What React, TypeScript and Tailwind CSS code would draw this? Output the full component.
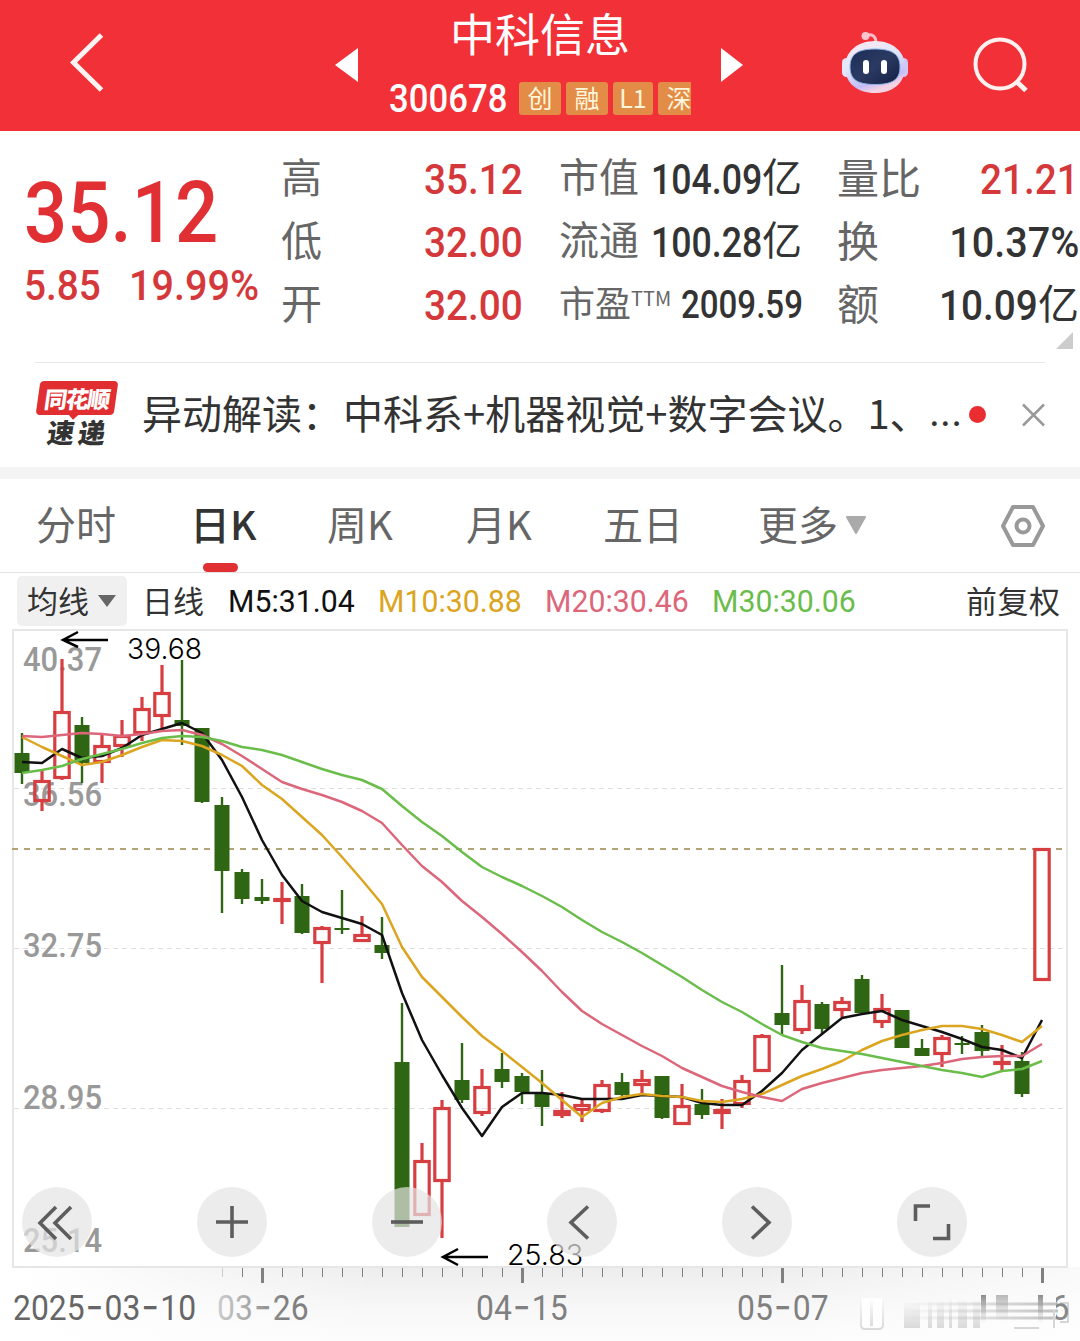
type Candle = [up: number, high: number, top: number, bottom: number, low: number];

// up flag, then wick and body positions on the chart
const candles: Candle[] = [
    [0, 733, 753, 773, 784], [1, 771, 780, 802, 811], [1, 659, 711, 779, 780], [0, 717, 725, 763, 783],
    [1, 733, 745, 763, 783], [1, 720, 735, 747, 757], [1, 697, 708, 734, 741], [1, 665, 692, 717, 728],
    [0, 660, 720, 726, 745], [0, 728, 728, 802, 803], [0, 797, 805, 871, 913], [0, 869, 872, 899, 904],
    [0, 879, 897, 901, 904], [1, 882, 898, 902, 924], [0, 884, 896, 933, 934], [1, 926, 927, 944, 983],
    [0, 890, 928, 930, 934], [1, 916, 934, 942, 942], [0, 917, 945, 953, 959], [0, 1003, 1062, 1227, 1227],
    [1, 1143, 1160, 1216, 1216], [1, 1100, 1107, 1182, 1238], [0, 1043, 1080, 1100, 1103], [1, 1069, 1086, 1114, 1116],
    [0, 1053, 1069, 1082, 1088], [0, 1073, 1076, 1092, 1104], [0, 1070, 1093, 1107, 1126], [1, 1092, 1110, 1116, 1118],
    [1, 1099, 1104, 1111, 1122], [1, 1080, 1084, 1112, 1113], [0, 1073, 1082, 1095, 1096], [1, 1070, 1079, 1086, 1095],
    [0, 1076, 1076, 1118, 1119], [1, 1084, 1105, 1125, 1125], [0, 1089, 1104, 1115, 1119], [1, 1099, 1109, 1114, 1129],
    [1, 1075, 1080, 1105, 1108], [1, 1034, 1035, 1072, 1072], [0, 965, 1013, 1025, 1034], [1, 985, 1000, 1031, 1034],
    [0, 1002, 1004, 1029, 1034], [1, 997, 1001, 1011, 1017], [0, 975, 979, 1013, 1013], [1, 994, 1008, 1023, 1028],
    [0, 1010, 1010, 1048, 1048], [0, 1039, 1048, 1056, 1056], [1, 1035, 1037, 1055, 1067], [0, 1036, 1043, 1045, 1054],
    [0, 1025, 1032, 1051, 1056], [1, 1045, 1061, 1065, 1071], [0, 1052, 1061, 1094, 1097], [1, 848, 848, 981, 981],
];

const averages = [
    {
        color: "#111111",
        values: [762, 763, 749, 758, 756, 748, 735, 729, 723, 733, 760, 797, 840, 875, 901, 912, 918, 924, 935, 993, 1040, 1075, 1108, 1136, 1107, 1093, 1093, 1095, 1099, 1099, 1099, 1095, 1096, 1097, 1103, 1105, 1105, 1091, 1073, 1050, 1034, 1018, 1014, 1011, 1020, 1026, 1032, 1039, 1047, 1050, 1058, 1020],
    },
    {
        color: "#dba520",
        values: [737, 747, 756, 765, 762, 755, 747, 740, 741, 746, 755, 766, 785, 799, 817, 835, 857, 880, 904, 947, 977, 997, 1017, 1036, 1051, 1067, 1083, 1100, 1117, 1103, 1097, 1094, 1096, 1097, 1101, 1102, 1099, 1094, 1085, 1076, 1069, 1061, 1050, 1041, 1035, 1030, 1026, 1026, 1029, 1035, 1042, 1026],
    },
    {
        color: "#dc667a",
        values: [736, 737, 735, 733, 734, 736, 734, 731, 730, 735, 744, 756, 769, 782, 789, 795, 802, 811, 823, 845, 866, 882, 901, 917, 934, 952, 971, 992, 1011, 1024, 1035, 1046, 1056, 1068, 1077, 1086, 1092, 1097, 1101, 1089, 1083, 1078, 1073, 1070, 1068, 1066, 1063, 1059, 1057, 1056, 1056, 1044],
    },
    {
        color: "#6abd4b",
        values: [773, 770, 766, 759, 754, 749, 743, 738, 736, 737, 741, 747, 750, 755, 762, 769, 775, 780, 789, 806, 822, 836, 852, 867, 877, 886, 896, 907, 920, 932, 942, 953, 965, 977, 990, 1002, 1012, 1024, 1035, 1042, 1048, 1051, 1054, 1058, 1062, 1066, 1070, 1073, 1077, 1071, 1069, 1061],
    },
];

const priceLabels = [
    { text: "40.37", y: 671 },
    { text: "36.56", y: 806 },
    { text: "32.75", y: 957 },
    { text: "28.95", y: 1109 },
    { text: "25.14", y: 1252 },
];

const candleX = (i: number) => 22 + i * 20;

function Robot() {
    return (
        <svg width="68" height="64" viewBox="0 0 68 64">
            <defs>
                <linearGradient id="shell" x1="0" y1="0" x2="0.4" y2="1">
                    <stop offset="0" stopColor="#ffe9ee" />
                    <stop offset="0.5" stopColor="#dfe6fb" />
                    <stop offset="0.85" stopColor="#c5bdf6" />
                    <stop offset="1" stopColor="#f6d3e2" />
                </linearGradient>
                <linearGradient id="visor" x1="0" y1="0" x2="1" y2="1">
                    <stop offset="0" stopColor="#1d2d55" />
                    <stop offset="0.5" stopColor="#2b3a62" />
                    <stop offset="1" stopColor="#141d42" />
                </linearGradient>
            </defs>
            <path d="M24 5 C31 2 35 5 35 12" fill="none" stroke="#f9bccb" strokeWidth="3" />
            <circle cx="24.500" cy="5" r="4" fill="#ffc4ce" />
            <rect x="1" y="27" width="9" height="19" rx="4.500" fill="#e9e3fb" />
            <rect x="58" y="27" width="9" height="19" rx="4.500" fill="#cfc6f5" />
            <path d="M34 10 C52 10 64 21 64 36 C64 52 52 62 34 62 C16 62 4 52 4 36 C4 21 16 10 34 10Z" fill="url(#shell)" />
            <path d="M34 18 C51 18 59 23 59 36 C59 49 51 53.500 34 53.500 C17 53.500 9 49 9 36 C9 23 17 18 34 18Z" fill="url(#visor)" stroke="#8eb7e8" strokeWidth="1" />
            <rect x="22" y="29" width="6" height="14" rx="3" fill="#fff" />
            <rect x="40" y="29" width="6" height="14" rx="3" fill="#fff" />
        </svg>
    );
}

function Header() {
    return (
        <header className="flex h-[131px] bg-[#f13037] pl-[69px] text-white">
            <button className="mt-[32px] h-[62px] w-[36px]">
                <svg width="36" height="62" viewBox="0 0 36 62" fill="none" stroke="#fff4f3" strokeWidth="5">
                    <path d="M32.500 3 L4.500 30.500 L32.500 58" />
                </svg>
            </button>
            <svg className="mt-[48px] ml-[230px]" width="24" height="34" viewBox="0 0 24 34" fill="#fff">
                <path d="M0 17 L23 0 V34Z" />
            </svg>
            <div className="ml-[30px] w-[302px]">
                <h1 className="mt-[6px] h-[54px] text-center text-[45px] leading-[54px]">中科信息</h1>
                <div className="mt-[14px] flex h-[48px] items-center overflow-hidden">
                    <span className="-mr-[10px] w-[140px] shrink-0 origin-left scale-x-[0.89] pt-[3px] font-[Roboto] text-[39px] leading-[45px] font-medium">300678</span>
                    <div className="flex gap-[5px] text-[25px] leading-[30px] text-[#fff6dc]">
                        <span className="h-[33px] w-[42px] shrink-0 rounded-[3px] bg-[#e38c47] text-center">创</span>
                        <span className="h-[33px] w-[42px] shrink-0 rounded-[3px] bg-[#e38c47] text-center">融</span>
                        <span className="h-[33px] w-[40px] shrink-0 rounded-[3px] bg-[#e38c47] text-center">L1</span>
                        <span className="h-[33px] w-[42px] shrink-0 rounded-[3px] bg-[#e38c47] text-center">深</span>
                    </div>
                </div>
            </div>
            <svg className="mt-[48px] ml-[30px]" width="24" height="34" viewBox="0 0 24 34" fill="#fff">
                <path d="M0 0 L22 17 L0 34Z" />
            </svg>
            <div className="mt-[31px] ml-[96px]">
                <Robot />
            </div>
            <svg className="mt-[36px] ml-[63px]" width="58" height="60" viewBox="0 0 58 60" fill="none" stroke="#fff1f0" strokeWidth="4">
                <circle cx="28" cy="28" r="24.500" />
                <path d="M45 46 L54 54.500" strokeWidth="5" />
            </svg>
        </header>
    );
}

function Quote() {
    return (
        <section className="relative flex h-[231px] pt-[17px] pl-[24px] leading-[63px] whitespace-nowrap text-[#333]">
            <div className="w-[257px] font-[Roboto] font-medium text-[#e13033]">
                <div className="mt-[20px] h-[88px] origin-left scale-x-[0.885] text-[86px] leading-[90px]">35.12</div>
                <div className="flex h-[60px] text-[43px] leading-[58px] text-[#d5383b]">
                    <span className="w-[105px] origin-left scale-x-[0.9]">5.85</span>
                    <span className="origin-left scale-x-[0.92]">19.99%</span>
                </div>
            </div>
            <div className="w-[242px]">
                <div className="flex h-[63px] justify-between">
                    <span className="-mt-[4px] text-[41px] text-[#666]">高</span>
                    <span className="origin-right scale-x-[0.9] font-[Roboto] text-[43px] font-medium text-[#d5383b]">35.12</span>
                </div>
                <div className="flex h-[63px] justify-between">
                    <span className="-mt-[4px] text-[41px] text-[#666]">低</span>
                    <span className="origin-right scale-x-[0.9] font-[Roboto] text-[43px] font-medium text-[#d5383b]">32.00</span>
                </div>
                <div className="flex h-[63px] justify-between">
                    <span className="-mt-[4px] text-[41px] text-[#666]">开</span>
                    <span className="origin-right scale-x-[0.9] font-[Roboto] text-[43px] font-medium text-[#d5383b]">32.00</span>
                </div>
            </div>
            <div className="ml-[36px] w-[243px]">
                <div className="flex h-[63px] justify-between">
                    <span className="-mt-[4px] text-[40px] text-[#666]">市值</span>
                    <span className="flex w-[151px] justify-between">
                        <span className="w-[110px] origin-left scale-x-[0.85] font-[Roboto] text-[42px] font-medium">104.09</span>
                        <span className="-mt-[4px] text-[40px]">亿</span>
                    </span>
                </div>
                <div className="flex h-[63px] justify-between">
                    <span className="-mt-[4px] text-[40px] text-[#666]">流通</span>
                    <span className="flex w-[151px] justify-between">
                        <span className="w-[110px] origin-left scale-x-[0.85] font-[Roboto] text-[42px] font-medium">100.28</span>
                        <span className="-mt-[4px] text-[40px]">亿</span>
                    </span>
                </div>
                <div className="flex h-[63px] justify-between">
                    <span className="-mt-[4px] flex text-[36px] text-[#666]">
                        市盈
                        <span className="-mt-[4px] text-[20px]">TTM</span>
                    </span>
                    <span className="w-[121px] origin-left scale-x-[0.87] font-[Roboto] text-[38px] font-medium">2009.59</span>
                </div>
            </div>
            <div className="ml-[35px] w-[242px]">
                <div className="flex h-[63px] justify-between">
                    <span className="-mt-[4px] text-[42px] text-[#666]">量比</span>
                    <span className="origin-right scale-x-[0.9] font-[Roboto] text-[43px] font-medium text-[#d5383b]">21.21</span>
                </div>
                <div className="flex h-[63px] justify-between">
                    <span className="-mt-[4px] text-[42px] text-[#666]">换</span>
                    <span className="origin-right scale-x-[0.92] font-[Roboto] text-[43px] font-medium">10.37%</span>
                </div>
                <div className="flex h-[63px] justify-between">
                    <span className="-mt-[4px] text-[42px] text-[#666]">额</span>
                    <span className="flex">
                        <span className="origin-right scale-x-[0.9] font-[Roboto] text-[43px] font-medium">10.09</span>
                        <span className="-mt-[4px] text-[41px]">亿</span>
                    </span>
                </div>
            </div>
            <svg className="absolute top-[201px] right-[7px]" width="17" height="17" viewBox="0 0 17 17" fill="#ccc">
                <path d="M17 0 V17 H0Z" />
            </svg>
        </section>
    );
}

function News() {
    return (
        <section className="mx-[35px] flex h-[105px] border-t border-[#e8e8e8] whitespace-nowrap">
            <div className="mt-[18px] w-[83px] shrink-0">
                <div className="relative ml-[3px] flex h-[34px] w-[78px] -skew-x-[8deg] items-center justify-center rounded-[4px] bg-[#e12e31] text-[23px] leading-none font-black tracking-[-1.500px] text-white">
                    同花顺
                    <span className="absolute top-[29px] left-[34px] size-[8px] rotate-45 bg-[#e12e31]"></span>
                </div>
                <div className="mt-[3px] flex -skew-x-[8deg] justify-center gap-[4px] text-[27px] leading-[28px] font-black text-[#333]">
                    <span>速</span>
                    <span>递</span>
                </div>
            </div>
            <p className="mt-[19px] ml-[24px] flex w-[827px] text-[40px] leading-[60px] text-[#333]">
                <span className="w-[201px] shrink-0">异动解读：</span>
                <span className="w-[586px] shrink-0">中科系+机器视觉+数字会议。1、</span>
                <span className="font-[Roboto] text-[42px]">...</span>
            </p>
            <span className="mt-[43px] ml-[1px] size-[17px] shrink-0 rounded-full bg-[#e92d30]"></span>
            <svg className="mt-[40px] ml-[35px] shrink-0" width="24" height="24" viewBox="0 0 24 24" stroke="#999" strokeWidth="2.500">
                <path d="M2 1.500 L23 22.500 M23 1.500 L2 22.500" />
            </svg>
        </section>
    );
}

function Tabs() {
    return (
        <nav className="flex h-[94px] border-b border-[#e4e4e4] pl-[36px] text-[40px] leading-[89px] whitespace-nowrap text-[#666]">
            <span className="w-[154px]">分时</span>
            <span className="relative w-[137px] font-medium text-[#333]">
                日K
                <span className="absolute top-[84px] left-[13px] h-[9px] w-[35px] rounded-full bg-[#e03033]"></span>
            </span>
            <span className="w-[139px]">周K</span>
            <span className="w-[137px]">月K</span>
            <span className="w-[155px]">五日</span>
            <span className="w-[87px]">更多</span>
            <svg className="mt-[37px]" width="22" height="19" viewBox="0 0 22 19" fill="#aaa">
                <path d="M2 1 H20 L11 17Z" stroke="#aaa" strokeWidth="2" strokeLinejoin="round" />
            </svg>
            <svg className="mt-[25px] ml-[133px]" width="46" height="44" viewBox="0 0 46 44" fill="none" stroke="#999" strokeWidth="4">
                <path d="M13 3 H33 L43 22 L33 41 H13 L3 22Z" strokeLinejoin="round" />
                <circle cx="23" cy="22" r="6.500" />
            </svg>
        </nav>
    );
}

function Legend() {
    return (
        <div className="flex h-[56px] pt-[3px] pl-[17px] text-[31px] leading-[50px] whitespace-nowrap text-[#333]">
            <button className="flex h-[50px] w-[110px] rounded-[5px] bg-[#f0f0f0] pl-[10px] leading-[47px]">
                均线
                <svg className="mt-[19px] ml-[9px]" width="18" height="12" viewBox="0 0 18 12" fill="#666">
                    <path d="M0 0 H18 L9 12Z" />
                </svg>
            </button>
            <span className="ml-[15px] w-[86px] leading-[47px]">日线</span>
            <span className="w-[150px] origin-left scale-x-[0.945] font-[Roboto] text-[32px] text-[#111]">M5:31.04</span>
            <span className="w-[167px] origin-left scale-x-[0.945] font-[Roboto] text-[32px] text-[#dba520]">M10:30.88</span>
            <span className="w-[167px] origin-left scale-x-[0.945] font-[Roboto] text-[32px] text-[#dc667a]">M20:30.46</span>
            <span className="w-[254px] origin-left scale-x-[0.945] font-[Roboto] text-[32px] text-[#6abd4b]">M30:30.06</span>
            <span className="leading-[47px] tracking-[0.500px]">前复权</span>
        </div>
    );
}

function Candlestick({ data, x }: { data: Candle; x: number }) {
    const [up, high, top, bottom, low] = data;

    if (up) {
        return (
            <g stroke="#d63e42" strokeWidth="3.200" fill="none">
                <path d={`M${x} ${high} V${top} M${x} ${bottom} V${low}`} />
                <rect x={x - 7.2} y={top + 1.5} width="14.400" height={bottom - top - 3} />
            </g>
        );
    }
    return (
        <g fill="#2f6613">
            <rect x={x - 1.2} y={high} width="2.400" height={low - high} />
            <rect x={x - 7.5} y={top} width="15" height={bottom - top} />
        </g>
    );
}

function DateLabel({ x, parts, color }: { x: number; parts: string[]; color: string }) {
    return (
        <text x={x} y="1320" fill={color} className="font-[Roboto] text-[35px]">
            {parts.map((part, i) => (
                <tspan key={i}>
                    {i > 0 && <tspan dx="1" className="font-[Inter] text-[39px]">-</tspan>}
                    <tspan dx={i > 0 ? 1 : 0} textLength={part.length * 17.9} lengthAdjust="spacingAndGlyphs">{part}</tspan>
                </tspan>
            ))}
        </text>
    );
}

function Chart() {
    return (
        <svg className="block" width="1080" height="712" viewBox="0 629 1080 712" fill="none">
            <defs>
                <linearGradient id="axis" x1="0" y1="0" x2="0" y2="1">
                    <stop offset="0" stopColor="#ededed" />
                    <stop offset="0.6" stopColor="#f8f8f8" />
                    <stop offset="1" stopColor="#fcfcfc" />
                </linearGradient>
                <linearGradient id="axisFade" x1="0" y1="0" x2="1" y2="0">
                    <stop offset="0.02" stopColor="#fff" />
                    <stop offset="0.35" stopColor="#fff" stopOpacity="0" />
                    <stop offset="0.7" stopColor="#fff" stopOpacity="0" />
                    <stop offset="1" stopColor="#fff" stopOpacity="0.7" />
                </linearGradient>
                <linearGradient id="dateFade" gradientUnits="userSpaceOnUse" x1="214" y1="0" x2="285" y2="0">
                    <stop offset="0" stopColor="#d0d0d0" />
                    <stop offset="1" stopColor="#808080" />
                </linearGradient>
                <linearGradient id="smudge" x1="0" y1="0" x2="0" y2="1">
                    <stop offset="0" stopColor="#999" stopOpacity="0.02" />
                    <stop offset="1" stopColor="#999" stopOpacity="0.35" />
                </linearGradient>
                <linearGradient id="smudgeDown" x1="0" y1="0" x2="0" y2="1">
                    <stop offset="0" stopColor="#777" stopOpacity="0.85" />
                    <stop offset="1" stopColor="#999" stopOpacity="0" />
                </linearGradient>
                <linearGradient id="smudgeAcross" gradientUnits="userSpaceOnUse" x1="900" y1="0" x2="1060" y2="0">
                    <stop offset="0" stopColor="#aaa" stopOpacity="0" />
                    <stop offset="1" stopColor="#999" stopOpacity="0.6" />
                </linearGradient>
                <clipPath id="lastDigit">
                    <rect x="1056" y="1290" width="14" height="34" />
                </clipPath>
            </defs>

            <rect x="0" y="1267" width="1080" height="74" fill="url(#axis)" />
            <rect x="0" y="1267" width="1080" height="74" fill="url(#axisFade)" />
            <rect x="13" y="630" width="1054" height="637" stroke="#e6e6e6" strokeWidth="2" />
            <path d="M14 788.500 H1066 M14 948.500 H1066 M14 1108.500 H1066" stroke="#dedede" strokeDasharray="5 4" />
            <path d="M12 849 H1066" stroke="#b3a478" strokeWidth="1.800" strokeDasharray="6 6" />

            {priceLabels.map(({ text, y }) => (
                <text key={text} x="23" y={y} textLength="79" lengthAdjust="spacingAndGlyphs" fill="#999" className="font-[Roboto] text-[34px] font-medium">
                    {text}
                </text>
            ))}
            {candles.map((data, i) => (
                <Candlestick key={i} data={data} x={candleX(i)} />
            ))}
            {averages.map(({ color, values }) => (
                <polyline
                    key={color}
                    points={values.map((y, i) => `${candleX(i)},${y}`).join(" ")}
                    stroke={color}
                    strokeWidth="2.500"
                    strokeLinejoin="round"
                />
            ))}

            <g stroke="#000" strokeWidth="2.500">
                <path d="M108 640 H63 M78 632 L63 640 L78 647" />
                <path d="M488 1257 H443 M458 1249 L443 1257 L458 1265" />
            </g>
            <text x="127" y="659" textLength="75" lengthAdjust="spacingAndGlyphs" fill="#000" className="font-[Inter] text-[29px] font-light">39.68</text>
            <text x="507" y="1265" textLength="76" lengthAdjust="spacingAndGlyphs" fill="#000" className="font-[Inter] text-[29px] font-light">25.83</text>

            {candles.map((_, i) => {
                if (i < 10) return null;
                const major = [12, 25, 38, 51].includes(i);
                return (
                    <path
                        key={i}
                        d={`M${candleX(i) + 0.5} 1268 V${major ? 1283 : 1277}`}
                        stroke={i === 10 ? "#ccc" : "#808080"}
                        strokeWidth={major ? 3 : 1}
                    />
                );
            })}

            <DateLabel x={13} parts={["2025", "03", "10"]} color="#666" />
            <DateLabel x={217} parts={["03", "26"]} color="url(#dateFade)" />
            <DateLabel x={476} parts={["04", "15"]} color="#808080" />
            <DateLabel x={737} parts={["05", "07"]} color="#808080" />

            {/* smeared end of the axis */}
            <g>
                <path d="M861 1298 V1325 Q861 1329 865 1329 H878 Q883 1329 883 1325 V1298" fill="#fff" fillOpacity="0.800" stroke="url(#smudge)" strokeWidth="2" />
                <rect x="870" y="1300" width="3" height="26" fill="url(#smudge)" />
                <rect x="904" y="1303" width="16" height="25" fill="url(#smudge)" />
                <rect x="928" y="1301" width="4" height="27" fill="url(#smudge)" />
                <rect x="937" y="1301" width="7" height="27" fill="url(#smudge)" />
                <rect x="949" y="1298" width="3" height="30" fill="url(#smudge)" />
                <rect x="958" y="1300" width="9" height="28" fill="url(#smudge)" />
                <rect x="973" y="1300" width="7" height="28" fill="url(#smudge)" />
                <rect x="981" y="1295" width="5" height="28" fill="url(#smudgeDown)" />
                <rect x="996" y="1295" width="12" height="26" fill="url(#smudgeDown)" opacity="0.600" />
                <rect x="1038" y="1295" width="5" height="28" fill="url(#smudgeDown)" />
                <path d="M900 1304 L1058 1304.100 M900 1311 L1058 1311.100 M900 1318 L1058 1318.100" stroke="url(#smudgeAcross)" strokeWidth="3" />
                <path d="M1014 1328 H1039 M1054 1310 V1328 M1060 1322 H1068 V1303 H1060" stroke="#d6d6d6" strokeWidth="2" />
                <text x="1050" y="1320" clipPath="url(#lastDigit)" fill="#888" className="font-[Roboto] text-[35px]">6</text>
            </g>
        </svg>
    );
}

const controls = [
    { name: "first", d: "M34 20 L18 36 L34 52 M49 20 L33 36 L49 52" },
    { name: "zoom in", d: "M19 35 H51 M35 19 V51" },
    { name: "zoom out", d: "M19 35 H51" },
    { name: "previous", d: "M41 19.500 L24 35.500 L41 51.500" },
    { name: "next", d: "M30 19.500 L47 35.500 L30 51.500" },
    { name: "full screen", d: "M33 19 H18.500 V34 M51.500 37 V51.500 H36" },
];

function Controls() {
    return (
        <div className="absolute top-[558px] left-[22px] flex gap-[105px]">
            {controls.map(({ name, d }) => (
                <button key={name} aria-label={name} className="size-[70px] rounded-full bg-[rgba(228,228,228,0.7)]">
                    <svg width="70" height="70" viewBox="0 0 70 70" fill="none" stroke="#555" strokeOpacity="0.950" strokeWidth="3.600">
                        <path d={d} />
                    </svg>
                </button>
            ))}
        </div>
    );
}

export default function App() {
    return (
        <div className="h-[1341px] w-[1080px] overflow-hidden bg-white font-[Noto_Sans_CJK_SC,sans-serif]">
            <Header />
            <Quote />
            <News />
            <div className="h-[12px] bg-[#f4f4f4]"></div>
            <Tabs />
            <Legend />
            <div className="relative">
                <Chart />
                <Controls />
            </div>
        </div>
    );
}
